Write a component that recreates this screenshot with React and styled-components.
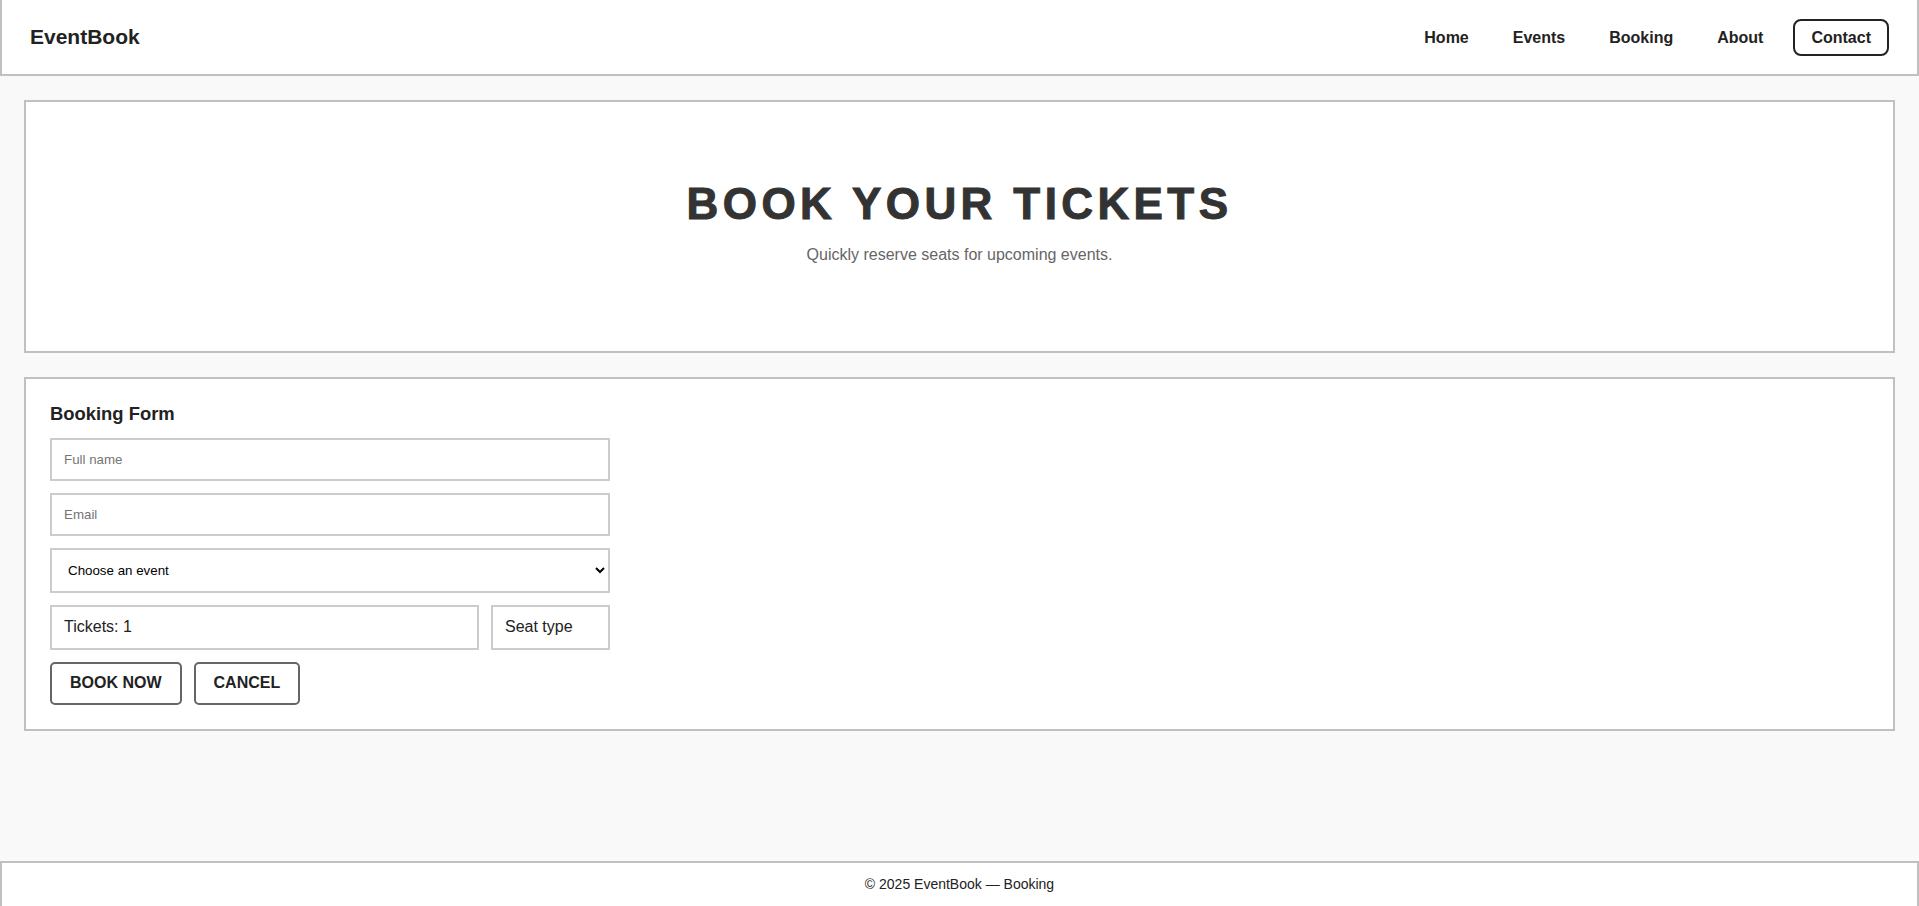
import styled, { createGlobalStyle } from 'styled-components';

const GlobalStyle = createGlobalStyle`
  * { box-sizing: border-box; }
  body {
    margin: 0;
    background: #f9f9f9;
    color: #222;
    font-family: "Liberation Sans", Arial, sans-serif;
  }
`;

const Page = styled.div`
  min-height: 100vh;
  display: flex;
  flex-direction: column;
`;

const Header = styled.header`
  height: 76px;
  display: flex;
  align-items: center;
  justify-content: space-between;
  padding: 0 28px;
  background: #fff;
  border: 2px solid #c0c0c0;
  border-top: none;
`;

const Logo = styled.div`
  font-size: 21px;
  font-weight: 700;
  color: #222;
`;

const Nav = styled.nav`
  display: flex;
  align-items: center;
  gap: 16px;
`;

const NavLink = styled.a`
  font-size: 16px;
  font-weight: 700;
  line-height: 19px;
  color: #222;
  text-decoration: none;
  padding: ${(p) => (p.$boxed ? '7px 16px' : '8px 14px')};
  border: ${(p) => (p.$boxed ? '2px solid #222' : 'none')};
  border-radius: 8px;
  cursor: pointer;
`;

const Main = styled.main`
  flex: 1;
  display: flex;
  flex-direction: column;
  gap: 24px;
  padding: 24px 24px;
`;

const Panel = styled.section`
  background: #fff;
  border: 2px solid #c0c0c0;
`;

const Hero = styled(Panel)`
  padding: 77px 24px 87px;
  text-align: center;
`;

const HeroTitle = styled.h1`
  margin: 0 0 16px;
  font-size: 44px;
  line-height: 1.15;
  font-weight: 900;
  letter-spacing: 0.1em;
  color: #333;
  -webkit-text-stroke: 1px #333;
`;

const HeroText = styled.p`
  margin: 0;
  font-size: 16px;
  color: #666;
`;

const FormPanel = styled(Panel)`
  padding: 24px;
`;

const FormTitle = styled.h2`
  margin: 0 0 14px;
  font-size: 18.4px;
  line-height: 1.15;
  font-weight: 700;
  color: #222;
`;

const Form = styled.form`
  display: flex;
  flex-direction: column;
  gap: 12px;
  width: 560px;
`;

const Input = styled.input`
  width: 100%;
  padding: 12px;
  border: 2px solid #ccc;
  border-radius: 0;
  background: #fff;
  font-family: "Liberation Sans", Arial, sans-serif;
  font-size: 13.33px;
  color: #222;
  outline: none;

  &::placeholder {
    color: #757575;
  }
`;

const Select = styled.select`
  width: 100%;
  padding: 12px;
  border: 2px solid #ccc;
  border-radius: 0;
  background: #fff;
  font-family: "Liberation Sans", Arial, sans-serif;
  font-size: 13.33px;
  color: #000;
  outline: none;
`;

const Row = styled.div`
  display: grid;
  grid-template-columns: 1fr 119px;
  gap: 12px;
`;

const Field = styled.div`
  padding: 11.5px 12px;
  border: 2px solid #ccc;
  background: #fff;
  font-size: 16px;
  line-height: 1.15;
  color: #222;
`;

const Actions = styled.div`
  display: flex;
  gap: 12px;
`;

const Button = styled.button`
  padding: 10px 18px;
  border: 2px solid #666;
  border-radius: 5px;
  background: #fff;
  font-family: "Liberation Sans", Arial, sans-serif;
  font-size: 16px;
  font-weight: 700;
  line-height: 1.15;
  color: #222;
  cursor: pointer;
`;

const Footer = styled.footer`
  padding: 13px 0 14px;
  background: #fff;
  border: 2px solid #c0c0c0;
  border-bottom: none;
  text-align: center;
  font-size: 14px;
  color: #222;
`;

export default function App() {
  const links = ['Home', 'Events', 'Booking', 'About'];
  return (
    <Page>
      <GlobalStyle />
      <Header>
        <Logo>EventBook</Logo>
        <Nav>
          {links.map((l) => (
            <NavLink key={l}>{l}</NavLink>
          ))}
          <NavLink $boxed>Contact</NavLink>
        </Nav>
      </Header>
      <Main>
        <Hero>
          <HeroTitle>BOOK YOUR TICKETS</HeroTitle>
          <HeroText>Quickly reserve seats for upcoming events.</HeroText>
        </Hero>
        <FormPanel>
          <FormTitle>Booking Form</FormTitle>
          <Form onSubmit={(e) => e.preventDefault()}>
            <Input placeholder="Full name" />
            <Input placeholder="Email" />
            <Select defaultValue="">
              <option value="">Choose an event</option>
              <option>Summer Concert</option>
              <option>Tech Conference</option>
            </Select>
            <Row>
              <Field>Tickets: 1</Field>
              <Field>Seat type</Field>
            </Row>
            <Actions>
              <Button type="submit">BOOK NOW</Button>
              <Button type="button">CANCEL</Button>
            </Actions>
          </Form>
        </FormPanel>
      </Main>
      <Footer>© 2025 EventBook — Booking</Footer>
    </Page>
  );
}
